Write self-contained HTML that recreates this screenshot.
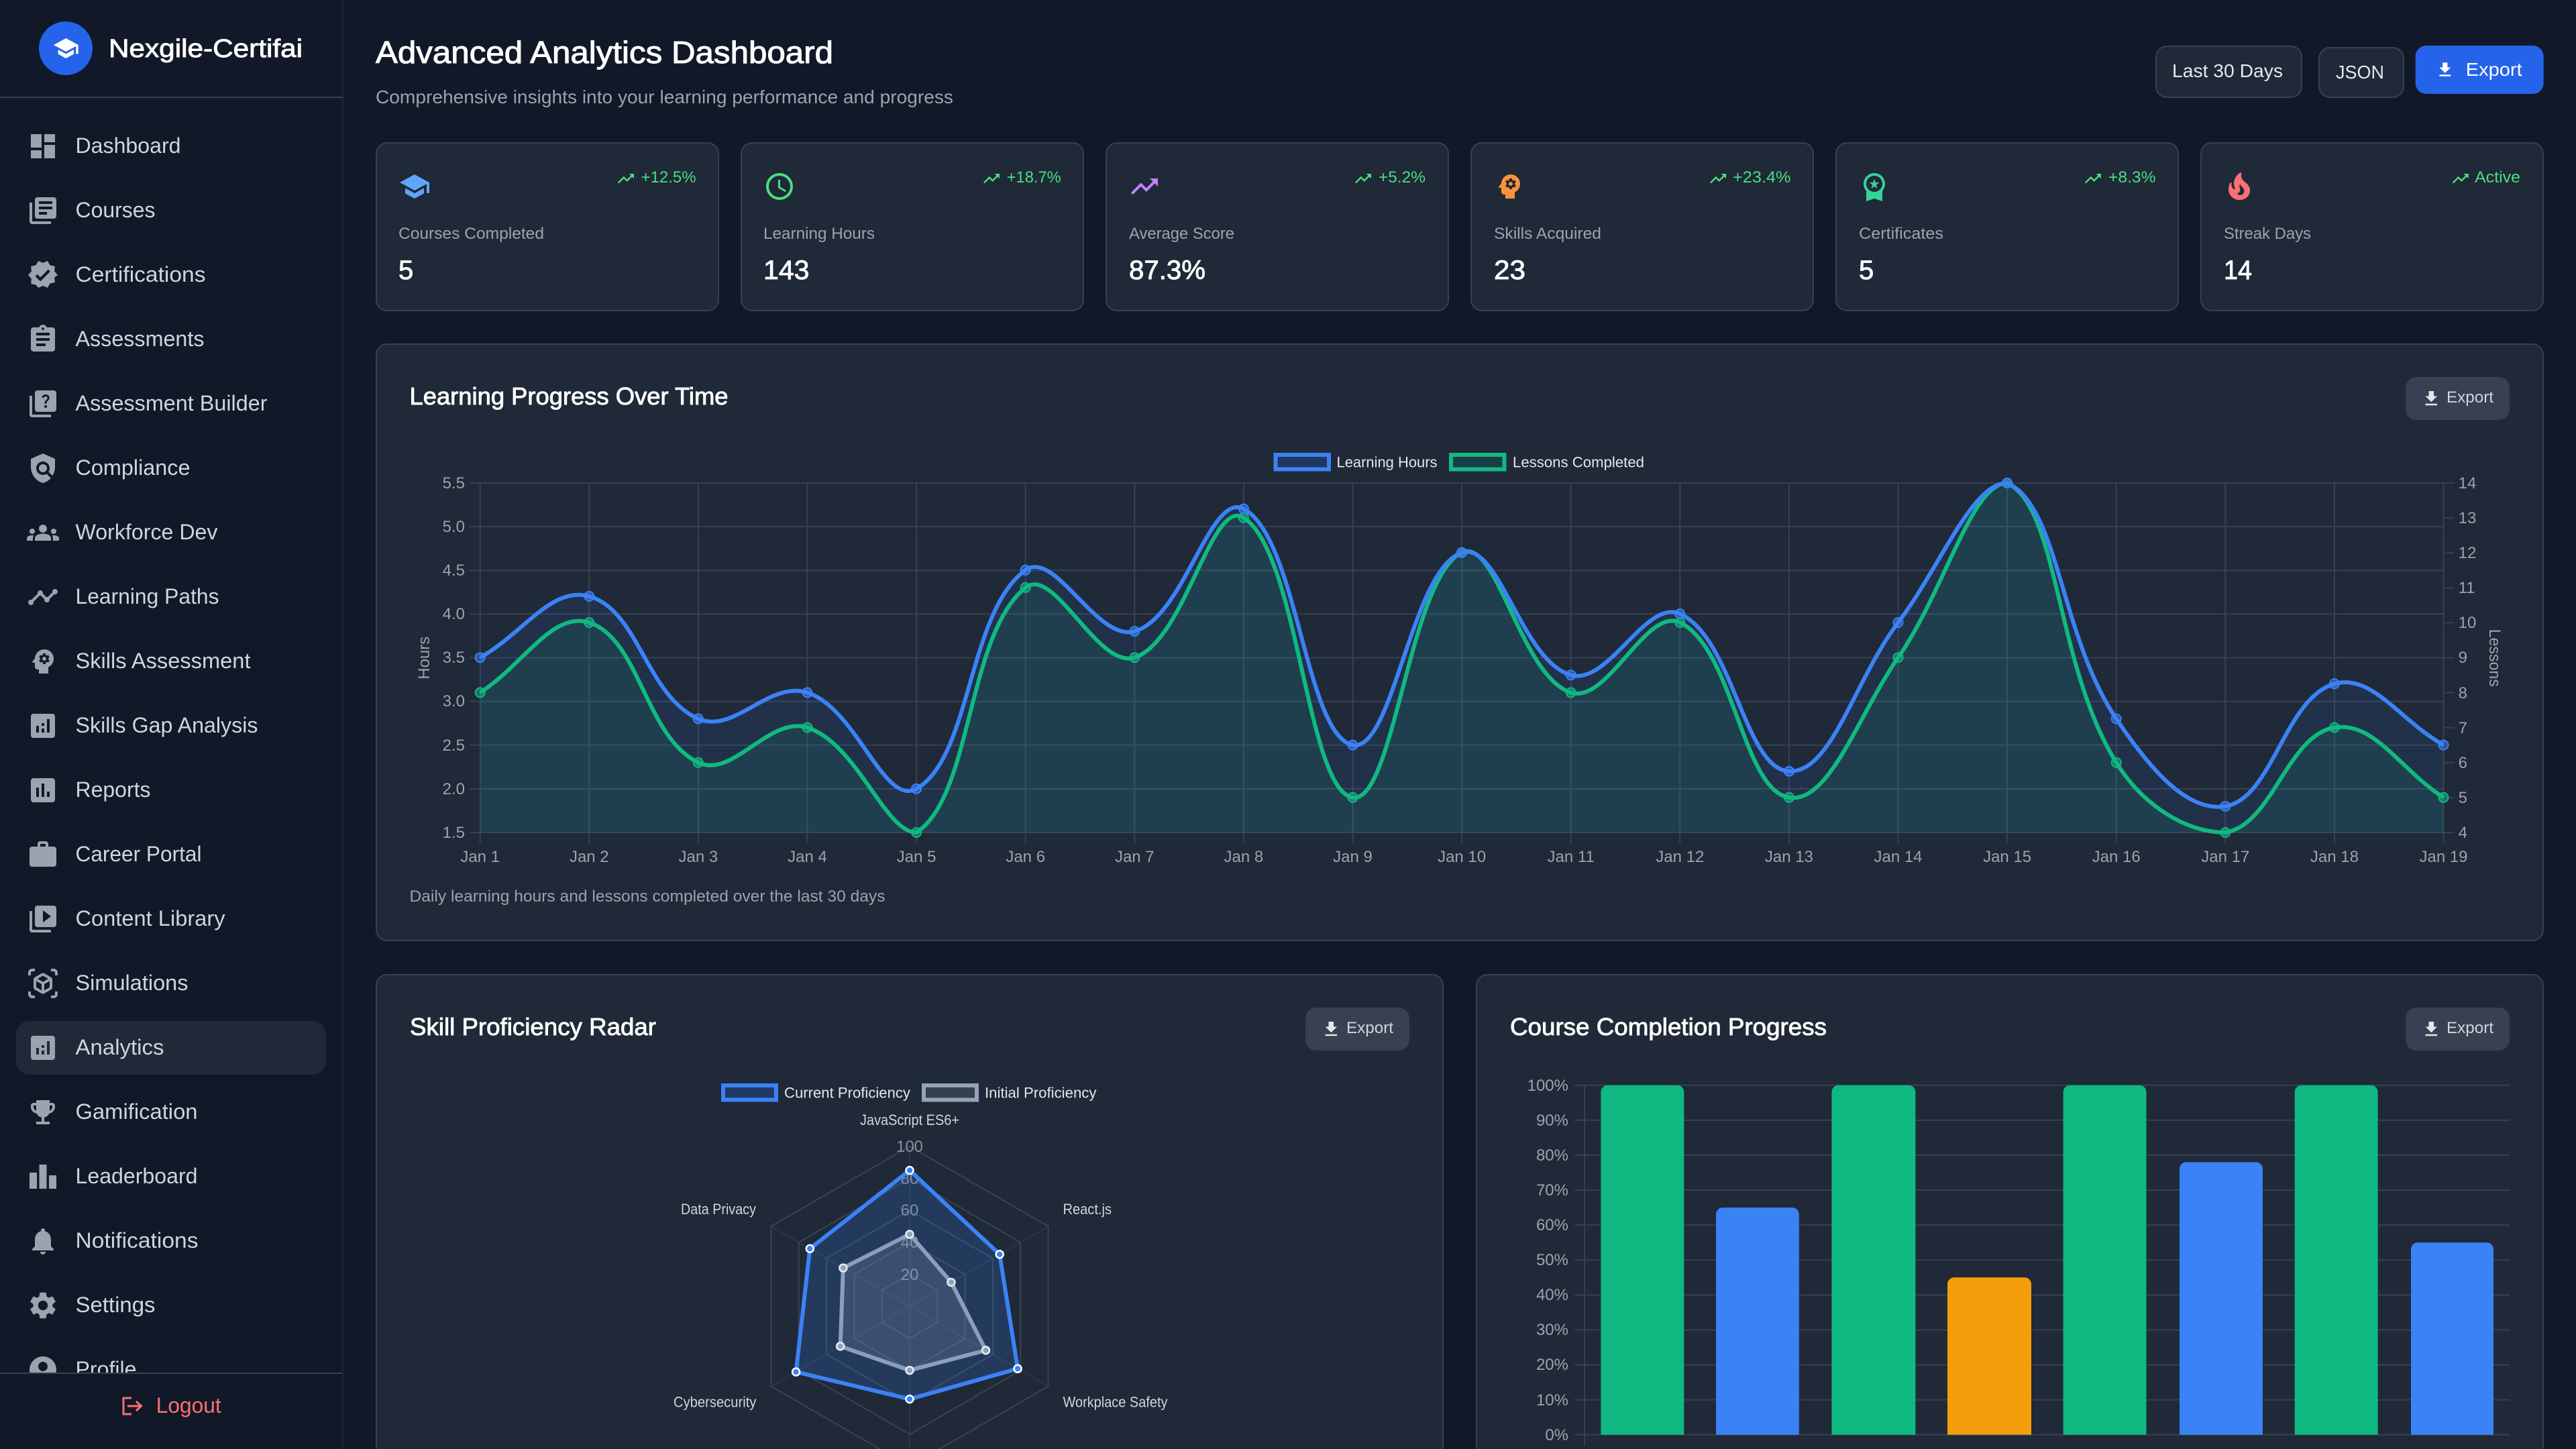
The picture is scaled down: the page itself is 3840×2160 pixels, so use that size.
<!DOCTYPE html>
<html lang="en">
<head>
<meta charset="utf-8">
<title>Advanced Analytics Dashboard</title>
<style>
html,body{margin:0;padding:0;background:#111827;width:3840px;height:2160px;overflow:hidden}
svg{display:block;font-family:"Liberation Sans",sans-serif}
.nav{font-size:32px;fill:#d1d5db}
.ic{fill:#9ca3af}
.lab{font-size:24px;fill:#9ca3af}
.val{font-size:40px;fill:#fff;stroke:#fff;stroke-width:.9px}
.tr{font-size:24px;fill:#4ade80}
.card{fill:#1f2937;stroke:#374151;stroke-width:2}
.tk{font-size:24px;fill:#9ca3af}
.h3{font-size:36px;fill:#fff;stroke:#fff;stroke-width:.9px}
.leg{font-size:22px;fill:#e5e7eb}
.pl{font-size:22px;fill:#d1d5db}
.ex{font-size:24px;fill:#d1d5db}
</style>
</head>
<body>
<svg xmlns="http://www.w3.org/2000/svg" width="3840" height="2160" viewBox="0 0 3840 2160">
<defs>
<path id="school" d="M5 13.18v4L12 21l7-3.82v-4L12 17l-7-3.82zM12 3L1 9l11 6 9-4.91V17h2V9L12 3z"/>
<path id="trend" d="M16 6l2.29 2.29-4.88 4.88-4-4L2 16.59 3.41 18l6-6 4 4 6.3-6.29L22 12V6z"/>
<path id="dl" d="M19 9h-4V3H9v6H5l7 7 7-7zM5 18v2h14v-2H5z"/>
<path id="analytics" d="M19 3H5c-1.1 0-2 .9-2 2v14c0 1.1.9 2 2 2h14c1.1 0 2-.9 2-2V5c0-1.1-.9-2-2-2zM9 17H7v-5h2v5zm4 0h-2v-3h2v3zm0-5h-2v-2h2v2zm4 5h-2V7h2v10z"/>
<path id="psy" fill-rule="evenodd" d="M13 3C9.25 3 6.2 5.94 6.02 9.64L4.1 12.2c-.25.33-.01.8.4.8H6v3c0 1.1.9 2 2 2h1v3h7v-4.68c2.36-1.12 4-3.53 4-6.32 0-3.87-3.13-7-7-7zm3 7c0 .13-.01.26-.02.39l.83.66c.08.06.1.16.05.25l-.8 1.39c-.05.09-.16.12-.24.09l-.99-.4c-.21.16-.43.29-.67.39L14 13.83c-.01.1-.1.17-.2.17h-1.6c-.1 0-.18-.07-.2-.17l-.15-1.06c-.25-.1-.47-.23-.68-.39l-.99.4c-.09.03-.2 0-.25-.09l-.8-1.39c-.05-.08-.03-.19.05-.25l.84-.66c-.01-.13-.02-.26-.02-.39s.02-.27.04-.39l-.85-.66c-.08-.06-.1-.16-.05-.26l.8-1.38c.05-.09.15-.12.24-.09l1 .4c.2-.15.43-.29.67-.39L12 6.17c.02-.1.1-.17.2-.17h1.6c.1 0 .18.07.2.17l.15 1.06c.24.1.46.23.67.39l1-.4c.09-.03.2 0 .24.09l.8 1.38c.05.09.03.2-.05.26l-.85.66c.03.12.04.25.04.39zM13 8.57c-.79 0-1.43.64-1.43 1.43s.64 1.43 1.43 1.43 1.43-.64 1.43-1.43-.64-1.43-1.43-1.43z"/>
<clipPath id="navclip"><rect x="0" y="146" width="510" height="1900"/></clipPath>
</defs>

<rect width="3840" height="2160" fill="#111827"/>

<!-- SIDEBAR -->
<rect x="510" y="0" width="2" height="2160" fill="#1f2937"/>
<circle cx="98" cy="72" r="40" fill="#2563eb"/>
<use href="#school" transform="translate(78.3 52) scale(1.667)" fill="#fff"/>
<text x="162" y="85" font-size="38" fill="#fff" stroke="#fff" stroke-width=".9" textLength="289" lengthAdjust="spacingAndGlyphs">Nexgile-Certifai</text>
<rect x="0" y="144" width="510" height="2" fill="#374151"/>

<g clip-path="url(#navclip)">
<rect x="24" y="1522" width="462" height="80" rx="20" fill="#1f2937"/>
<g class="ic">
<path transform="translate(40 194) scale(2)" d="M3 13h8V3H3v10zm0 8h8v-6H3v6zm10 0h8V11h-8v10zm0-18v6h8V3h-8z"/>
<path transform="translate(40 290) scale(2)" d="M4 6H2v14c0 1.1.9 2 2 2h14v-2H4V6zm16-4H8c-1.1 0-2 .9-2 2v12c0 1.1.9 2 2 2h12c1.1 0 2-.9 2-2V4c0-1.1-.9-2-2-2zm-1 9H9V9h10v2zm-4 4H9v-2h6v2zm4-8H9V5h10v2z"/>
<path transform="translate(40 386) scale(2)" d="M23 12l-2.44-2.79.34-3.69-3.61-.82-1.89-3.2L12 2.96 8.6 1.5 6.71 4.69 3.1 5.5l.34 3.7L1 12l2.44 2.79-.34 3.7 3.61.82L8.6 21.5l3.4-1.47 3.4 1.46 1.89-3.19 3.61-.82-.34-3.69L23 12zm-12.91 4.72l-3.8-3.81 1.48-1.48 2.32 2.33 5.85-5.87 1.48 1.48-7.33 7.35z"/>
<path transform="translate(40 482) scale(2)" d="M19 3h-4.18C14.4 1.84 13.3 1 12 1c-1.3 0-2.4.84-2.82 2H5c-1.1 0-2 .9-2 2v14c0 1.1.9 2 2 2h14c1.1 0 2-.9 2-2V5c0-1.1-.9-2-2-2zm-7 0c.55 0 1 .45 1 1s-.45 1-1 1-1-.45-1-1 .45-1 1-1zm2 14H7v-2h7v2zm3-4H7v-2h10v2zm0-4H7V7h10v2z"/>
<path transform="translate(40 578) scale(2)" d="M4 6H2v14c0 1.1.9 2 2 2h14v-2H4V6zm16-4H8c-1.1 0-2 .9-2 2v12c0 1.1.9 2 2 2h12c1.1 0 2-.9 2-2V4c0-1.1-.9-2-2-2zm-5.99 13c-.59 0-1.05-.47-1.05-1.05 0-.59.47-1.04 1.05-1.04.59 0 1.04.45 1.04 1.04-.01.58-.45 1.05-1.04 1.05zm2.5-6.17c-.63.93-1.23 1.21-1.56 1.81-.13.24-.18.4-.18 1.18h-1.52c0-.41-.06-1.08.26-1.65.41-.73 1.18-1.16 1.63-1.8.48-.68.21-1.94-1.14-1.94-.88 0-1.32.67-1.5 1.23l-1.37-.57C11.51 5.96 12.52 5 13.99 5c1.23 0 2.08.56 2.51 1.26.37.61.58 1.73.01 2.57z"/>
<g transform="translate(40 674) scale(2)"><path d="M21 5l-9-4-9 4v6c0 5.55 3.84 10.74 9 12 2.3-.56 4.33-1.9 5.88-3.71l-3.12-3.12c-1.94 1.29-4.58 1.07-6.29-.64-1.95-1.95-1.95-5.12 0-7.07 1.95-1.95 5.12-1.95 7.07 0 1.71 1.71 1.92 4.35.64 6.29l2.9 2.9C20.29 15.69 21 13.38 21 11V5z"/><circle cx="12" cy="12" r="3"/></g>
<path transform="translate(40 770) scale(2)" d="M12 12.75c1.63 0 3.07.39 4.24.9 1.08.48 1.76 1.56 1.76 2.73V18H6v-1.61c0-1.18.68-2.26 1.76-2.73 1.17-.52 2.61-.91 4.24-.91zM4 13c1.1 0 2-.9 2-2s-.9-2-2-2-2 .9-2 2 .9 2 2 2zm1.13 1.1c-.37-.06-.74-.1-1.13-.1-.99 0-1.93.21-2.78.58C.48 14.9 0 15.62 0 16.43V18h4.5v-1.61c0-.83.23-1.61.63-2.29zM20 13c1.1 0 2-.9 2-2s-.9-2-2-2-2 .9-2 2 .9 2 2 2zm4 3.43c0-.81-.48-1.53-1.22-1.85-.85-.37-1.79-.58-2.78-.58-.39 0-.76.04-1.13.1.4.68.63 1.46.63 2.29V18H24v-1.57zM12 6c1.66 0 3 1.34 3 3s-1.34 3-3 3-3-1.34-3-3 1.34-3 3-3z"/>
<path transform="translate(40 866) scale(2)" d="M23 8c0 1.1-.9 2-2 2-.18 0-.35-.02-.51-.07l-3.56 3.55c.05.16.07.34.07.52 0 1.1-.9 2-2 2s-2-.9-2-2c0-.18.02-.36.07-.52l-2.55-2.55c-.16.05-.34.07-.52.07s-.36-.02-.52-.07l-4.55 4.56c.05.16.07.33.07.51 0 1.1-.9 2-2 2s-2-.9-2-2 .9-2 2-2c.18 0 .35.02.51.07l4.56-4.55C8.02 9.36 8 9.18 8 9c0-1.1.9-2 2-2s2 .9 2 2c0 .18-.02.36-.07.52l2.55 2.55c.16-.05.34-.07.52-.07s.36.02.52.07l3.55-3.56C19.02 8.35 19 8.18 19 8c0-1.1.9-2 2-2s2 .9 2 2z"/>
<use href="#psy" transform="translate(40 962) scale(2)"/>
<use href="#analytics" transform="translate(40 1058) scale(2)"/>
<path transform="translate(40 1154) scale(2)" d="M19 3H5c-1.1 0-2 .9-2 2v14c0 1.1.9 2 2 2h14c1.1 0 2-.9 2-2V5c0-1.1-.9-2-2-2zM9 17H7v-7h2v7zm4 0h-2V7h2v10zm4 0h-2v-4h2v4z"/>
<path transform="translate(40 1250) scale(2)" d="M20 6h-4V4c0-1.11-.89-2-2-2h-4c-1.11 0-2 .89-2 2v2H4c-1.11 0-1.99.89-1.99 2L2 19c0 1.11.89 2 2 2h16c1.11 0 2-.89 2-2V8c0-1.11-.89-2-2-2zm-6 0h-4V4h4v2z"/>
<path transform="translate(40 1346) scale(2)" d="M4 6H2v14c0 1.1.9 2 2 2h14v-2H4V6zm16-4H8c-1.1 0-2 .9-2 2v12c0 1.1.9 2 2 2h12c1.1 0 2-.9 2-2V4c0-1.1-.9-2-2-2zm-8 12.5v-9l6 4.5-6 4.5z"/>
<path transform="translate(40 1442) scale(2)" d="M3 4c0-.55.45-1 1-1h2V1H4C2.34 1 1 2.34 1 4v2h2V4zm0 16v-2H1v2c0 1.66 1.34 3 3 3h2v-2H4c-.55 0-1-.45-1-1zM20 1h-2v2h2c.55 0 1 .45 1 1v2h2V4c0-1.66-1.34-3-3-3zm1 19c0 .55-.45 1-1 1h-2v2h2c1.66 0 3-1.34 3-3v-2h-2v2zm-2-5.13V9.13c0-.72-.38-1.38-1-1.73l-5-2.88c-.31-.18-.65-.27-1-.27s-.69.09-1 .27L6 7.39c-.62.36-1 1.02-1 1.74v5.74c0 .72.38 1.38 1 1.73l5 2.88c.31.18.65.27 1 .27s.69-.09 1-.27l5-2.88c.62-.35 1-1.01 1-1.73zm-8 2.3l-4-2.3v-4.63l4 2.33v4.6zm1-6.33L8.04 8.53 12 6.25l3.96 2.28L12 10.84zm5 4.03l-4 2.3v-4.6l4-2.33v4.63z"/>
<use href="#analytics" transform="translate(40 1538) scale(2)"/>
<path transform="translate(40 1634) scale(2)" d="M19 5h-2V3H7v2H5c-1.1 0-2 .9-2 2v1c0 2.55 1.92 4.63 4.39 4.94.63 1.5 1.98 2.63 3.61 2.96V19H7v2h10v-2h-4v-3.1c1.63-.33 2.98-1.46 3.61-2.96C19.08 12.63 21 10.55 21 8V7c0-1.1-.9-2-2-2zM5 8V7h2v3.82C5.84 10.4 5 9.3 5 8zm14 0c0 1.3-.84 2.4-2 2.82V7h2v1z"/>
<path transform="translate(40 1730) scale(2)" d="M7.5 21H2V9h5.5v12zm7.25-18h-5.5v18h5.5V3zM22 11h-5.5v10H22V11z"/>
<path transform="translate(40 1826) scale(2)" d="M12 22c1.1 0 2-.9 2-2h-4c0 1.1.89 2 2 2zm6-6v-5c0-3.07-1.64-5.64-4.5-6.32V4c0-.83-.67-1.5-1.5-1.5s-1.5.67-1.5 1.5v.68C7.63 5.36 6 7.92 6 11v5l-2 2v1h16v-1l-2-2z"/>
<path transform="translate(40 1922) scale(2)" d="M19.14 12.94c.04-.3.06-.61.06-.94 0-.32-.02-.64-.07-.94l2.03-1.58c.18-.14.23-.41.12-.61l-1.92-3.32c-.12-.22-.37-.29-.59-.22l-2.39.96c-.5-.38-1.03-.7-1.62-.94l-.36-2.54c-.04-.24-.24-.41-.48-.41h-3.84c-.24 0-.43.17-.47.41l-.36 2.54c-.59.24-1.13.57-1.62.94l-2.39-.96c-.22-.08-.47 0-.59.22L2.74 8.87c-.12.21-.08.47.12.61l2.03 1.58c-.05.3-.09.63-.09.94s.02.64.07.94l-2.03 1.58c-.18.14-.23.41-.12.61l1.92 3.32c.12.22.37.29.59.22l2.39-.96c.5.38 1.03.7 1.62.94l.36 2.54c.05.24.24.41.48.41h3.84c.24 0 .44-.17.47-.41l.36-2.54c.59-.24 1.13-.56 1.62-.94l2.39.96c.22.08.47 0 .59-.22l1.92-3.32c.12-.22.07-.47-.12-.61l-2.01-1.58zM12 15.6c-1.98 0-3.6-1.62-3.6-3.6s1.62-3.6 3.6-3.6 3.6 1.62 3.6 3.6-1.62 3.6-3.6 3.6z"/>
<path transform="translate(40 2018) scale(2)" d="M12 2C6.48 2 2 6.48 2 12s4.48 10 10 10 10-4.48 10-10S17.52 2 12 2zm0 4c1.93 0 3.5 1.57 3.5 3.5S13.93 13 12 13s-3.5-1.57-3.5-3.5S10.07 6 12 6zm0 14c-2.03 0-4.43-.82-6.14-2.88C7.55 15.8 9.68 15 12 15s4.45.8 6.14 2.12C16.43 19.18 14.03 20 12 20z"/>
</g>
<g class="nav">
<text x="112.500" y="228" textLength="157" lengthAdjust="spacingAndGlyphs">Dashboard</text>
<text x="112.500" y="324" textLength="119" lengthAdjust="spacingAndGlyphs">Courses</text>
<text x="112.500" y="420" textLength="194" lengthAdjust="spacingAndGlyphs">Certifications</text>
<text x="112.500" y="516" textLength="192" lengthAdjust="spacingAndGlyphs">Assessments</text>
<text x="112.500" y="612" textLength="286" lengthAdjust="spacingAndGlyphs">Assessment Builder</text>
<text x="112.500" y="708" textLength="171" lengthAdjust="spacingAndGlyphs">Compliance</text>
<text x="112.500" y="804" textLength="212" lengthAdjust="spacingAndGlyphs">Workforce Dev</text>
<text x="112.500" y="900" textLength="214" lengthAdjust="spacingAndGlyphs">Learning Paths</text>
<text x="112.500" y="996" textLength="261" lengthAdjust="spacingAndGlyphs">Skills Assessment</text>
<text x="112.500" y="1092" textLength="272" lengthAdjust="spacingAndGlyphs">Skills Gap Analysis</text>
<text x="112.500" y="1188" textLength="112" lengthAdjust="spacingAndGlyphs">Reports</text>
<text x="112.500" y="1284" textLength="188" lengthAdjust="spacingAndGlyphs">Career Portal</text>
<text x="112.500" y="1380" textLength="223" lengthAdjust="spacingAndGlyphs">Content Library</text>
<text x="112.500" y="1476" textLength="168" lengthAdjust="spacingAndGlyphs">Simulations</text>
<text x="112.500" y="1572" textLength="132" lengthAdjust="spacingAndGlyphs">Analytics</text>
<text x="112.500" y="1668" textLength="182" lengthAdjust="spacingAndGlyphs">Gamification</text>
<text x="112.500" y="1764" textLength="182" lengthAdjust="spacingAndGlyphs">Leaderboard</text>
<text x="112.500" y="1860" textLength="183" lengthAdjust="spacingAndGlyphs">Notifications</text>
<text x="112.500" y="1956" textLength="119" lengthAdjust="spacingAndGlyphs">Settings</text>
<text x="112.500" y="2052" textLength="91" lengthAdjust="spacingAndGlyphs">Profile</text>
</g>
</g>
<rect x="0" y="2046" width="510" height="2" fill="#374151"/>
<path d="M196 2084H184V2108H196M190 2096H210M203 2089L210.500 2096L203 2103" fill="none" stroke="#f87171" stroke-width="3"/>
<text x="232.700" y="2106" font-size="32" fill="#f87171" textLength="97" lengthAdjust="spacingAndGlyphs">Logout</text>

<!-- HEADER -->
<text x="560" y="94" font-size="46" fill="#fff" stroke="#fff" stroke-width="1" textLength="682" lengthAdjust="spacingAndGlyphs">Advanced Analytics Dashboard</text>
<text x="560" y="154" font-size="28" fill="#9ca3af" textLength="861" lengthAdjust="spacingAndGlyphs">Comprehensive insights into your learning performance and progress</text>

<rect x="3214" y="69" width="217" height="76" rx="16" class="card"/>
<text x="3238" y="115" font-size="28" fill="#e5e7eb" textLength="165" lengthAdjust="spacingAndGlyphs">Last 30 Days</text>
<rect x="3457" y="71" width="126" height="74" rx="16" class="card"/>
<text x="3482" y="117" font-size="28" fill="#e5e7eb" textLength="72" lengthAdjust="spacingAndGlyphs">JSON</text>
<rect x="3600.700" y="68" width="191" height="72" rx="16" fill="#2563eb"/>
<use href="#dl" transform="translate(3630.400 89.700) scale(1.2)" fill="#fff"/>
<text x="3675.700" y="113" font-size="28" fill="#fff" textLength="84" lengthAdjust="spacingAndGlyphs">Export</text>

<!-- STAT CARDS -->
<rect x="561" y="213" width="510" height="250" rx="16" class="card"/>
<rect x="1105" y="213" width="510" height="250" rx="16" class="card"/>
<rect x="1649" y="213" width="510" height="250" rx="16" class="card"/>
<rect x="2193" y="213" width="510" height="250" rx="16" class="card"/>
<rect x="2737" y="213" width="510" height="250" rx="16" class="card"/>
<rect x="3281" y="213" width="510" height="250" rx="16" class="card"/>

<use href="#school" transform="translate(594 254) scale(2)" fill="#60a5fa"/>
<g transform="translate(1138 254) scale(2)" fill="#4ade80"><path d="M11.99 2C6.47 2 2 6.48 2 12s4.47 10 9.99 10C17.52 22 22 17.52 22 12S17.52 2 11.99 2zM12 20c-4.420 0-8-3.580-8-8s3.580-8 8-8 8 3.580 8 8-3.580 8-8 8z"/><path d="M12.5 7H11v6l5.250 3.150.75-1.230-4.500-2.670z"/></g>
<use href="#trend" transform="translate(1682 254) scale(2)" fill="#c084fc"/>
<use href="#psy" transform="translate(2226 254) scale(2)" fill="#fb923c"/>
<path transform="translate(2770 254) scale(2)" fill="#34d399" d="M9.68 13.69L12 11.93l2.31 1.76-.88-2.85L15.75 9h-2.84L12 6.19 11.09 9H8.25l2.31 1.84-.88 2.85zM20 10c0-4.42-3.58-8-8-8s-8 3.58-8 8c0 2.03.76 3.87 2 5.28V23l6-2 6 2v-7.72c1.24-1.41 2-3.25 2-5.28zm-8-6c3.31 0 6 2.69 6 6s-2.69 6-6 6-6-2.69-6-6 2.69-6 6-6z"/>
<path transform="translate(3314 254) scale(2)" fill="#f87171" d="M19.48 12.35c-1.57-4.08-7.16-4.3-5.81-10.23.1-.44-.37-.78-.75-.55C9.29 3.71 6.68 8 8.87 13.62c.18.46-.36.89-.75.59-1.81-1.37-2-3.34-1.84-4.75.06-.52-.62-.77-.91-.34C4.69 10.16 4 11.84 4 14.37c.38 5.6 5.11 7.32 6.81 7.54 2.43.31 5.06-.14 6.95-1.87 2.08-1.93 2.84-5.01 1.72-7.69zm-9.28 5.03c1.44-.35 2.18-1.39 2.38-2.31.33-1.43-.96-2.83-.09-5.09.33 1.87 3.27 3.04 3.27 5.08.08 2.53-2.66 4.7-5.56 2.32z"/>

<g fill="#4ade80">
<use href="#trend" transform="translate(918.600 251.800) scale(1.2)"/>
<use href="#trend" transform="translate(1463.600 251.800) scale(1.2)"/>
<use href="#trend" transform="translate(2017.600 251.800) scale(1.2)"/>
<use href="#trend" transform="translate(2546.600 251.800) scale(1.2)"/>
<use href="#trend" transform="translate(3105.500 251.800) scale(1.2)"/>
<use href="#trend" transform="translate(3653.300 251.800) scale(1.2)"/>
</g>
<text class="tr" x="955.600" y="272" textLength="82" lengthAdjust="spacingAndGlyphs">+12.5%</text>
<text class="tr" x="1500.700" y="272" textLength="81" lengthAdjust="spacingAndGlyphs">+18.7%</text>
<text class="tr" x="2055" y="272" textLength="70" lengthAdjust="spacingAndGlyphs">+5.2%</text>
<text class="tr" x="2583" y="272" textLength="86.500" lengthAdjust="spacingAndGlyphs">+23.4%</text>
<text class="tr" x="3143" y="272" textLength="70.500" lengthAdjust="spacingAndGlyphs">+8.3%</text>
<text class="tr" x="3689" y="272" textLength="68" lengthAdjust="spacingAndGlyphs">Active</text>

<text class="lab" x="594" y="356" textLength="217" lengthAdjust="spacingAndGlyphs">Courses Completed</text>
<text class="lab" x="1138" y="356" textLength="166" lengthAdjust="spacingAndGlyphs">Learning Hours</text>
<text class="lab" x="1683" y="356" textLength="157" lengthAdjust="spacingAndGlyphs">Average Score</text>
<text class="lab" x="2227" y="356" textLength="160" lengthAdjust="spacingAndGlyphs">Skills Acquired</text>
<text class="lab" x="2771" y="356" textLength="126" lengthAdjust="spacingAndGlyphs">Certificates</text>
<text class="lab" x="3315" y="356" textLength="130" lengthAdjust="spacingAndGlyphs">Streak Days</text>

<text class="val" x="594" y="416">5</text>
<text class="val" x="1138" y="416" textLength="68.500" lengthAdjust="spacingAndGlyphs">143</text>
<text class="val" x="1683" y="416" textLength="114" lengthAdjust="spacingAndGlyphs">87.3%</text>
<text class="val" x="2227" y="416" textLength="47" lengthAdjust="spacingAndGlyphs">23</text>
<text class="val" x="2771" y="416">5</text>
<text class="val" x="3315" y="416" textLength="42" lengthAdjust="spacingAndGlyphs">14</text>

<!-- LINE CHART CARD -->
<rect x="561" y="513" width="3230" height="889" rx="16" class="card"/>
<text class="h3" x="610.500" y="603" textLength="475" lengthAdjust="spacingAndGlyphs">Learning Progress Over Time</text>
<rect x="3586" y="562" width="155" height="64" rx="16" fill="#374151"/>
<use href="#dl" transform="translate(3609.300 579.200) scale(1.25)" fill="#e5e7eb"/>
<text class="ex" x="3647" y="600" textLength="70" lengthAdjust="spacingAndGlyphs">Export</text>

<!-- legend -->
<rect x="1901.500" y="678" width="79.500" height="21.500" fill="#22375e" stroke="#3b82f6" stroke-width="6"/>
<text class="leg" x="1992.500" y="696.500" textLength="150" lengthAdjust="spacingAndGlyphs">Learning Hours</text>
<rect x="2163" y="678" width="79.500" height="21.500" fill="#1b3c46" stroke="#10b981" stroke-width="6"/>
<text class="leg" x="2255" y="696.500" textLength="196" lengthAdjust="spacingAndGlyphs">Lessons Completed</text>

<!-- grid -->
<path fill="none" stroke="#374151" stroke-width="2" d="M700 720H3642.500M700 785H3642.500M700 850.200H3642.500M700 915.300H3642.500M700 980.500H3642.500M700 1045.600H3642.500M700 1110.800H3642.500M700 1175.900H3642.500M700 1241H3642.500
M715.700 720V1257M878.300 720V1257M1040.900 720V1257M1203.500 720V1257M1366.100 720V1257M1528.700 720V1257M1691.300 720V1257M1853.900 720V1257M2016.500 720V1257M2179.100 720V1257M2341.700 720V1257M2504.300 720V1257M2666.900 720V1257M2829.500 720V1257M2992.100 720V1257M3154.700 720V1257M3317.300 720V1257M3479.900 720V1257M3642.500 720V1257
M3642.500 720H3659M3642.500 772.100H3659M3642.500 824.200H3659M3642.500 876.300H3659M3642.500 928.400H3659M3642.500 980.500H3659M3642.500 1032.600H3659M3642.500 1084.700H3659M3642.500 1136.800H3659M3642.500 1188.900H3659M3642.500 1241H3659"/>

<!-- y labels left -->
<g class="tk" text-anchor="end">
<text x="693" y="728">5.5</text><text x="693" y="793">5.0</text><text x="693" y="858">4.5</text><text x="693" y="923">4.0</text><text x="693" y="988">3.5</text><text x="693" y="1053">3.0</text><text x="693" y="1119">2.5</text><text x="693" y="1184">2.0</text><text x="693" y="1249">1.5</text>
</g>
<g class="tk">
<text x="3664.600" y="728">14</text><text x="3664.600" y="780">13</text><text x="3664.600" y="832">12</text><text x="3664.600" y="884">11</text><text x="3664.600" y="936">10</text><text x="3664.600" y="988">9</text><text x="3664.600" y="1041">8</text><text x="3664.600" y="1093">7</text><text x="3664.600" y="1145">6</text><text x="3664.600" y="1197">5</text><text x="3664.600" y="1249">4</text>
</g>
<text class="tk" transform="translate(640 980.700) rotate(-90)" text-anchor="middle">Hours</text>
<text class="tk" transform="translate(3711 980.700) rotate(90)" text-anchor="middle" textLength="86" lengthAdjust="spacingAndGlyphs">Lessons</text>

<!-- x labels -->
<g class="tk" text-anchor="middle">
<text x="715.700" y="1285">Jan 1</text><text x="878.300" y="1285">Jan 2</text><text x="1040.900" y="1285">Jan 3</text><text x="1203.500" y="1285">Jan 4</text><text x="1366.100" y="1285">Jan 5</text><text x="1528.700" y="1285">Jan 6</text><text x="1691.300" y="1285">Jan 7</text><text x="1853.900" y="1285">Jan 8</text><text x="2016.500" y="1285">Jan 9</text><text x="2179.100" y="1285">Jan 10</text><text x="2341.700" y="1285">Jan 11</text><text x="2504.300" y="1285">Jan 12</text><text x="2666.900" y="1285">Jan 13</text><text x="2829.500" y="1285">Jan 14</text><text x="2992.100" y="1285">Jan 15</text><text x="3154.700" y="1285">Jan 16</text><text x="3317.300" y="1285">Jan 17</text><text x="3479.900" y="1285">Jan 18</text><text x="3642.500" y="1285">Jan 19</text>
</g>

<!-- fills -->
<path fill="#3b82f6" fill-opacity=".1" d="M715.7 980.2C780.7 943.7 822 873.1 878.3 888.9C952.1 909.6 963.6 1037.4 1040.9 1071.5C1093.7 1094.8 1146.9 1014.2 1203.5 1032.4C1276.9 1056 1317.6 1203 1366.1 1175.8C1447.7 1130 1442.7 911.9 1528.7 849.8C1572.7 818 1635 956.9 1691.3 941.1C1765.1 920.4 1803.6 732.3 1853.9 758.5C1933.7 800.1 1946.2 1096.5 2016.5 1110.6C2076.3 1122.6 2104.4 847.7 2179.1 823.7C2234.5 805.9 2267.9 985.6 2341.7 1006.3C2398 1022.1 2452.9 892.3 2504.3 915C2583 949.7 2600.6 1147.1 2666.9 1149.7C2730.7 1152.3 2763.2 1015.7 2829.5 928C2893.2 843.8 2939.4 720 2992.1 720C3069.5 754.1 3070.1 946.2 3154.7 1071.5C3200.2 1138.9 3257.5 1211.5 3317.3 1201.9C3387.5 1190.6 3406.1 1040 3479.9 1019.3C3536.2 1003.5 3577.5 1074.1 3642.5 1110.6L3642.5 1241L715.7 1241Z"/>
<path fill="#10b981" fill-opacity=".1" d="M715.7 1032.4C780.7 990.6 823.4 910.4 878.3 928C953.5 952.1 961.9 1098.7 1040.9 1136.7C1091.9 1161.3 1147.5 1066.5 1203.5 1084.5C1277.5 1108.2 1319.1 1241 1366.1 1241C1449.2 1187.7 1441 946.2 1528.7 875.9C1571.1 841.9 1636.4 997.8 1691.3 980.2C1766.5 956.1 1805.6 740.6 1853.9 771.6C1935.7 824 1947.8 1177.8 2016.5 1188.8C2077.8 1198.6 2100.8 861.3 2179.1 823.7C2230.9 798.8 2266.5 1008.3 2341.7 1032.4C2396.6 1050 2454.1 903.9 2504.3 928C2584.2 966.4 2597 1177.6 2666.9 1188.8C2727.1 1198.5 2769.3 1067 2829.5 980.2C2899.4 879.5 2939.2 720 2992.1 720C3069.3 757.1 3063.8 991.1 3154.7 1136.7C3193.9 1199.5 3257.3 1241 3317.3 1241C3387.4 1229.8 3409.8 1095.7 3479.9 1084.5C3539.9 1074.9 3577.5 1147 3642.5 1188.8L3642.5 1241L715.7 1241Z"/>
<!-- green line and points -->
<path fill="none" stroke="#10b981" stroke-width="6" d="M715.7 1032.4C780.7 990.6 823.4 910.4 878.3 928C953.5 952.1 961.9 1098.7 1040.9 1136.7C1091.9 1161.3 1147.5 1066.5 1203.5 1084.5C1277.5 1108.2 1319.1 1241 1366.1 1241C1449.2 1187.7 1441 946.2 1528.7 875.9C1571.1 841.9 1636.4 997.8 1691.3 980.2C1766.5 956.1 1805.6 740.6 1853.9 771.6C1935.7 824 1947.8 1177.8 2016.5 1188.8C2077.8 1198.6 2100.8 861.3 2179.1 823.7C2230.9 798.8 2266.5 1008.3 2341.7 1032.4C2396.6 1050 2454.1 903.9 2504.3 928C2584.2 966.4 2597 1177.6 2666.9 1188.8C2727.1 1198.5 2769.3 1067 2829.5 980.2C2899.4 879.5 2939.2 720 2992.1 720C3069.3 757.1 3063.8 991.1 3154.7 1136.7C3193.9 1199.5 3257.3 1241 3317.3 1241C3387.4 1229.8 3409.8 1095.7 3479.9 1084.5C3539.9 1074.9 3577.5 1147 3642.5 1188.8"/>
<g fill="#10b981" fill-opacity=".5" stroke="#10b981" stroke-width="2">
<circle cx="715.7" cy="1032.4" r="7"/><circle cx="878.3" cy="928" r="7"/><circle cx="1040.9" cy="1136.7" r="7"/><circle cx="1203.5" cy="1084.5" r="7"/><circle cx="1366.1" cy="1241" r="7"/><circle cx="1528.7" cy="875.9" r="7"/><circle cx="1691.3" cy="980.2" r="7"/><circle cx="1853.9" cy="771.6" r="7"/><circle cx="2016.5" cy="1188.8" r="7"/><circle cx="2179.1" cy="823.7" r="7"/><circle cx="2341.7" cy="1032.4" r="7"/><circle cx="2504.3" cy="928" r="7"/><circle cx="2666.9" cy="1188.8" r="7"/><circle cx="2829.5" cy="980.2" r="7"/><circle cx="2992.1" cy="720" r="7"/><circle cx="3154.7" cy="1136.7" r="7"/><circle cx="3317.3" cy="1241" r="7"/><circle cx="3479.9" cy="1084.5" r="7"/><circle cx="3642.5" cy="1188.8" r="7"/>
</g>
<!-- blue line and points -->
<path fill="none" stroke="#3b82f6" stroke-width="6" d="M715.7 980.2C780.7 943.7 822 873.1 878.3 888.9C952.1 909.6 963.6 1037.4 1040.9 1071.5C1093.7 1094.8 1146.9 1014.2 1203.5 1032.4C1276.9 1056 1317.6 1203 1366.1 1175.8C1447.7 1130 1442.7 911.9 1528.7 849.8C1572.7 818 1635 956.9 1691.3 941.1C1765.1 920.4 1803.6 732.3 1853.9 758.5C1933.7 800.1 1946.2 1096.5 2016.5 1110.6C2076.3 1122.6 2104.4 847.7 2179.1 823.7C2234.5 805.9 2267.9 985.6 2341.7 1006.3C2398 1022.1 2452.9 892.3 2504.3 915C2583 949.7 2600.6 1147.1 2666.9 1149.7C2730.7 1152.3 2763.2 1015.7 2829.5 928C2893.2 843.8 2939.4 720 2992.1 720C3069.5 754.1 3070.1 946.2 3154.7 1071.5C3200.2 1138.9 3257.5 1211.5 3317.3 1201.9C3387.5 1190.6 3406.1 1040 3479.9 1019.3C3536.2 1003.5 3577.5 1074.1 3642.5 1110.6"/>
<g fill="#3b82f6" fill-opacity=".5" stroke="#3b82f6" stroke-width="2">
<circle cx="715.7" cy="980.2" r="7"/><circle cx="878.3" cy="888.9" r="7"/><circle cx="1040.9" cy="1071.5" r="7"/><circle cx="1203.5" cy="1032.4" r="7"/><circle cx="1366.1" cy="1175.8" r="7"/><circle cx="1528.7" cy="849.8" r="7"/><circle cx="1691.3" cy="941.1" r="7"/><circle cx="1853.9" cy="758.5" r="7"/><circle cx="2016.5" cy="1110.6" r="7"/><circle cx="2179.1" cy="823.7" r="7"/><circle cx="2341.7" cy="1006.3" r="7"/><circle cx="2504.3" cy="915" r="7"/><circle cx="2666.9" cy="1149.7" r="7"/><circle cx="2829.5" cy="928" r="7"/><circle cx="2992.1" cy="720" r="7"/><circle cx="3154.7" cy="1071.5" r="7"/><circle cx="3317.3" cy="1201.9" r="7"/><circle cx="3479.9" cy="1019.3" r="7"/><circle cx="3642.5" cy="1110.6" r="7"/>
</g>
<text class="tk" x="610.500" y="1344" textLength="709" lengthAdjust="spacingAndGlyphs">Daily learning hours and lessons completed over the last 30 days</text>

<!-- RADAR CARD -->
<rect x="561" y="1453" width="1590" height="800" rx="16" class="card"/>
<text class="h3" x="611" y="1543" textLength="367" lengthAdjust="spacingAndGlyphs">Skill Proficiency Radar</text>
<rect x="1946" y="1502" width="155" height="64" rx="16" fill="#374151"/>
<use href="#dl" transform="translate(1969.300 1519.200) scale(1.25)" fill="#e5e7eb"/>
<text class="ex" x="2007" y="1540" textLength="70" lengthAdjust="spacingAndGlyphs">Export</text>

<rect x="1078" y="1618" width="79" height="21.500" fill="#223a63" stroke="#3b82f6" stroke-width="6"/>
<text class="leg" x="1169" y="1636.500" textLength="188" lengthAdjust="spacingAndGlyphs">Current Proficiency</text>
<rect x="1377" y="1618" width="79" height="21.500" fill="#35404f" stroke="#94a3b8" stroke-width="6"/>
<text class="leg" x="1468" y="1636.500" textLength="166.500" lengthAdjust="spacingAndGlyphs">Initial Proficiency</text>

<g class="pl">
<text x="1356" y="1677" text-anchor="middle" textLength="148" lengthAdjust="spacingAndGlyphs">JavaScript ES6+</text>
<text x="1584.500" y="1810" textLength="72.500" lengthAdjust="spacingAndGlyphs">React.js</text>
<text x="1015" y="1810" textLength="112" lengthAdjust="spacingAndGlyphs">Data Privacy</text>
<text x="1584.500" y="2097.500" textLength="156" lengthAdjust="spacingAndGlyphs">Workplace Safety</text>
<text x="1004" y="2097.500" textLength="123.400" lengthAdjust="spacingAndGlyphs">Cybersecurity</text>
</g>

<path fill="none" stroke="#2b3545" stroke-width="2" d="M1356 1947.300V1708.800M1356 1947.300L1562.500 1828M1356 1947.300L1562.500 2066.600M1356 1947.300V2185.800M1356 1947.300L1149.500 2066.600M1356 1947.300L1149.500 1828"/>
<g fill="none" stroke="#394352" stroke-width="2">
<polygon points="1356,1899.6 1397.3,1923.5 1397.3,1971.2 1356,1995 1314.7,1971.2 1314.7,1923.5"/>
<polygon points="1356,1851.9 1438.6,1899.6 1438.6,1995 1356,2042.7 1273.4,1995 1273.4,1899.6"/>
<polygon points="1356,1804.2 1479.9,1875.8 1479.9,2018.9 1356,2090.4 1232.1,2018.9 1232.1,1875.8"/>
<polygon points="1356,1756.5 1521.2,1851.9 1521.2,2042.7 1356,2138.1 1190.8,2042.7 1190.8,1851.9"/>
<polygon points="1356,1708.8 1562.5,1828 1562.5,2066.6 1356,2185.8 1149.5,2066.6 1149.5,1828"/>
</g>
<g class="tk" text-anchor="middle" fill-opacity=".85">
<text x="1356" y="1717">100</text><text x="1356" y="1765">80</text><text x="1356" y="1812">60</text><text x="1356" y="1860">40</text><text x="1356" y="1908">20</text>
</g>

<polygon points="1356,1744.6 1490.2,1869.8 1517.1,2040.3 1356,2085.6 1186.6,2045.1 1207.3,1861.4" fill="#3b82f6" fill-opacity=".2" stroke="#3b82f6" stroke-width="6"/>
<polygon points="1356,1840 1418,1911.5 1469.6,2012.9 1356,2042.7 1252.7,2006.900 1256.9,1890.1" fill="#94a3b8" fill-opacity=".2" stroke="#8c9dbd" stroke-width="6"/>
<g fill="#3b82f6" stroke="#fff" stroke-width="2.500">
<circle cx="1356" cy="1744.6" r="5.500"/><circle cx="1490.2" cy="1869.8" r="5.500"/><circle cx="1517.1" cy="2040.3" r="5.500"/><circle cx="1356" cy="2085.6" r="5.500"/><circle cx="1186.6" cy="2045.1" r="5.500"/><circle cx="1207.3" cy="1861.4" r="5.500"/>
</g>
<g fill="#94a3b8" stroke="#e8eef7" stroke-width="2.500">
<circle cx="1356" cy="1840" r="5.500"/><circle cx="1418" cy="1911.5" r="5.500"/><circle cx="1469.6" cy="2012.9" r="5.500"/><circle cx="1356" cy="2042.7" r="5.500"/><circle cx="1252.7" cy="2006.9" r="5.500"/><circle cx="1256.9" cy="1890.1" r="5.500"/>
</g>

<!-- BAR CARD -->
<rect x="2201" y="1453" width="1590" height="800" rx="16" class="card"/>
<text class="h3" x="2251" y="1543" textLength="472" lengthAdjust="spacingAndGlyphs">Course Completion Progress</text>
<rect x="3586" y="1502" width="155" height="64" rx="16" fill="#374151"/>
<use href="#dl" transform="translate(3609.300 1519.200) scale(1.25)" fill="#e5e7eb"/>
<text class="ex" x="3647" y="1540" textLength="70" lengthAdjust="spacingAndGlyphs">Export</text>

<path fill="none" stroke="#374151" stroke-width="2" d="M2347 1617.800H3741.500M2347 1669.900H3741.500M2347 1722H3741.500M2347 1774.100H3741.500M2347 1826.200H3741.500M2347 1878.300H3741.500M2347 1930.400H3741.500M2347 1982.500H3741.500M2347 2034.600H3741.500M2347 2086.700H3741.500M2347 2138.800H3741.500M2362 1617.800V2155"/>
<g class="tk" text-anchor="end">
<text x="2338" y="1626">100%</text><text x="2338" y="1678">90%</text><text x="2338" y="1730">80%</text><text x="2338" y="1782">70%</text><text x="2338" y="1834">60%</text><text x="2338" y="1886">50%</text><text x="2338" y="1938">40%</text><text x="2338" y="1990">30%</text><text x="2338" y="2042">20%</text><text x="2338" y="2095">10%</text><text x="2338" y="2147">0%</text>
</g>
<path fill="#10b981" d="M2386.400 2138.800V1627.800a10 10 0 0 1 10-10H2500.300a10 10 0 0 1 10 10V2138.800Z"/>
<path fill="#3b82f6" d="M2558 2138.800V1810.100a10 10 0 0 1 10-10H2671.800a10 10 0 0 1 10 10V2138.800Z"/>
<path fill="#10b981" d="M2730.500 2138.800V1627.800a10 10 0 0 1 10-10H2845.400a10 10 0 0 1 10 10V2138.800Z"/>
<path fill="#f59e0b" d="M2903 2138.800V1914.300a10 10 0 0 1 10-10H3018a10 10 0 0 1 10 10V2138.800Z"/>
<path fill="#10b981" d="M3075.600 2138.800V1627.800a10 10 0 0 1 10-10H3189.500a10 10 0 0 1 10 10V2138.800Z"/>
<path fill="#3b82f6" d="M3249 2138.800V1742.400a10 10 0 0 1 10-10H3363a10 10 0 0 1 10 10V2138.800Z"/>
<path fill="#10b981" d="M3420.700 2138.800V1627.800a10 10 0 0 1 10-10H3534.600a10 10 0 0 1 10 10V2138.800Z"/>
<path fill="#3b82f6" d="M3594 2138.800V1862.300a10 10 0 0 1 10-10H3707a10 10 0 0 1 10 10V2138.800Z"/>
</svg>
</body>
</html>
